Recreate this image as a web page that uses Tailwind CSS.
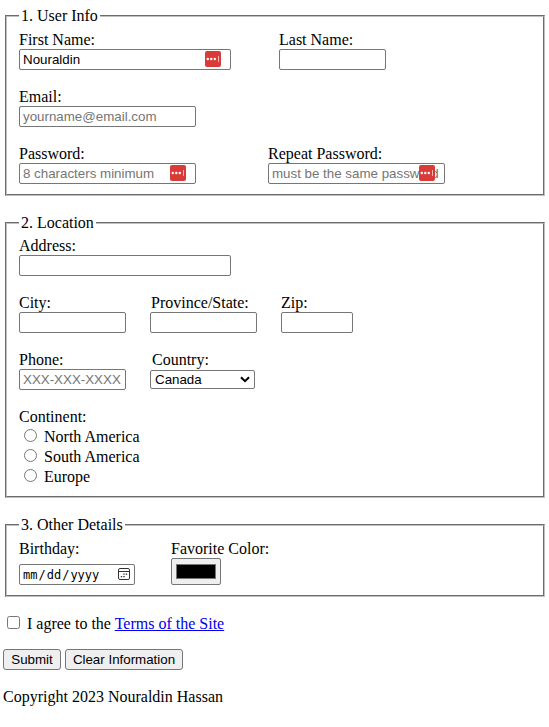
<!DOCTYPE html>
<html lang="en">
<head>
<meta charset="utf-8">
<title>Registration Form</title>
<script src="https://cdn.jsdelivr.net/npm/@tailwindcss/browser@4"></script>
</head>
<body class="bg-white text-black font-['Liberation_Serif',serif] text-[16px] leading-[18px]">
<svg class="hidden">
  <symbol id="key" viewBox="0 0 16 16"><rect width="16" height="16" rx="2" fill="#d93c38"/><g fill="#fff"><circle cx="2.8" cy="8" r="1.2"/><circle cx="6.3" cy="8" r="1.2"/><circle cx="9.8" cy="8" r="1.2"/></g><path d="M13.5 5v6" stroke="#f3b5b3" stroke-width="1"/></symbol>
</svg>
<form class="pt-[7px] pl-[3px] pr-1">
  <fieldset class="ml-[2px] min-w-0 border-2 border-[#c0c0c0] [border-style:groove] px-3 pt-[6px] pb-[10px]">
    <legend class="px-[2px] h-[18px]">1. User Info</legend>
    <div class="flex flex-col gap-[18px]">
      <div class="flex gap-12">
        <label class="relative block w-[212px]">First Name:
          <input type="text" value="Nouraldin" class="block w-full h-[21px] border border-[#767676] rounded-[2px] px-[3px] font-['Liberation_Sans',sans-serif] text-[13.333px] leading-[15px]">
          <svg class="absolute right-[10px] top-[20px] size-4"><use href="#key"/></svg>
        </label>
        <label class="block w-[107px]">Last Name:
          <input type="text" class="block w-full h-[21px] border border-[#767676] rounded-[2px]">
        </label>
      </div>
      <label class="block w-[177px]">Email:
        <input type="text" placeholder="yourname@email.com" class="block w-full h-[21px] border border-[#767676] rounded-[2px] px-[3px] font-['Liberation_Sans',sans-serif] text-[13.333px] leading-[15px] placeholder:text-[#757575]">
      </label>
      <div class="flex gap-[72px]">
        <label class="relative block w-[177px]">Password:
          <input type="text" placeholder="8 characters minimum" class="block w-full h-[21px] border border-[#767676] rounded-[2px] px-[3px] font-['Liberation_Sans',sans-serif] text-[13.333px] leading-[15px] placeholder:text-[#757575]">
          <svg class="absolute right-[10px] top-[20px] size-4"><use href="#key"/></svg>
        </label>
        <label class="relative block w-[177px]">Repeat Password:
          <input type="text" placeholder="must be the same password" class="block w-full h-[21px] border border-[#767676] rounded-[2px] px-[3px] font-['Liberation_Sans',sans-serif] text-[13.333px] leading-[15px] placeholder:text-[#757575]">
          <svg class="absolute right-[10px] top-[20px] size-4"><use href="#key"/></svg>
        </label>
      </div>
    </div>
  </fieldset>

  <fieldset class="mt-[18px] ml-[2px] min-w-0 border-2 border-[#c0c0c0] [border-style:groove] px-3 pt-[5px] pb-[10px]">
    <legend class="px-[2px] h-[18px]">2. Location</legend>
    <div class="flex flex-col gap-[18px]">
      <label class="block w-[212px]">Address:
        <input type="text" class="block w-full h-[21px] border border-[#767676] rounded-[2px]">
      </label>
      <div class="flex gap-6">
        <label class="block w-[107px]">City:
          <input type="text" class="block w-full h-[21px] border border-[#767676] rounded-[2px]">
        </label>
        <label class="block w-[107px]"><span class="block pl-px">Province/State:</span>
          <input type="text" class="block w-full h-[21px] border border-[#767676] rounded-[2px]">
        </label>
        <label class="block w-[72px]">Zip:
          <input type="text" class="block w-full h-[21px] border border-[#767676] rounded-[2px]">
        </label>
      </div>
      <div class="flex gap-6">
        <label class="block w-[107px]">Phone:
          <input type="text" placeholder="XXX-XXX-XXXX" class="block w-full h-[21px] border border-[#767676] rounded-[2px] px-[3px] font-['Liberation_Sans',sans-serif] text-[13.333px] leading-[15px] placeholder:text-[#757575]">
        </label>
        <label class="relative block w-[105px]"><span class="block pl-[2px]">Country:</span>
          <select class="mt-px block w-full h-[19px] appearance-none border border-[#767676] rounded-[2px] pl-1 bg-white font-['Liberation_Sans',sans-serif] text-[13.333px] leading-[15px]"><option>Canada</option></select>
          <svg class="absolute right-[5px] top-[25px] w-[10px] h-[7px]" viewBox="0 0 10 7"><path d="M1 1.2 5 5.2 9 1.2" fill="none" stroke="#000" stroke-width="2"/></svg>
        </label>
      </div>
      <div>
        <div>Continent:</div>
        <label class="flex h-5 gap-[7px] pl-[5px]"><input type="radio" name="continent" class="mt-[3px] size-[13px]"><span class="mt-[2px]">North America</span></label>
        <label class="flex h-5 gap-[7px] pl-[5px]"><input type="radio" name="continent" class="mt-[3px] size-[13px]"><span class="mt-[2px]">South America</span></label>
        <label class="flex h-5 gap-[7px] pl-[5px]"><input type="radio" name="continent" class="mt-[3px] size-[13px]"><span class="mt-[2px]">Europe</span></label>
      </div>
    </div>
  </fieldset>

  <fieldset class="mt-[18px] ml-[2px] min-w-0 border-2 border-[#c0c0c0] [border-style:groove] px-3 pt-[6px] pb-[10px]">
    <legend class="px-[2px] h-[18px]">3. Other Details</legend>
    <div class="flex gap-9">
      <div class="w-[116px]">Birthday:
        <div class="mt-[6px] flex h-[21px] items-center justify-between border border-[#767676] rounded-[2px] pl-[3px] pr-1 font-['DejaVu_Sans_Mono',monospace] text-[12px] leading-[15px]">
          <span class="flex gap-px pt-[2px]"><span>mm</span><span>/</span><span>dd</span><span>/</span><span>yyyy</span></span>
          <svg class="size-[12px] -mt-px" viewBox="0 0 12 12" fill="none" stroke="#333"><rect x=".5" y=".5" width="11" height="11" rx="1.5"/><path d="M1 3.5h10"/><path d="M5.3 6.2h1.4M7.8 6.2h1.4M2.8 8.7h1.4M5.3 8.7h1.4" stroke-width="1.3"/></svg>
        </div>
      </div>
      <div>Favorite Color:
        <div class="w-[50px] h-[27px] border border-[#767676] rounded-[2px] bg-[#efefef] px-1 py-[5px]"><div class="h-[15px] bg-black border border-[#777]"></div></div>
      </div>
    </div>
  </fieldset>

  <label class="mt-[18px] flex h-[18px] gap-[7px] pl-1"><input type="checkbox" class="mt-px size-[13px]"><span>I agree to the <a href="#" class="text-[#0000ee] underline">Terms of the Site</a></span></label>
  <div class="mt-4 flex gap-1 font-['Liberation_Sans',sans-serif] text-[13.333px] leading-[15px]">
    <button type="button" class="w-[58px] h-[21px] whitespace-nowrap border border-[#767676] rounded-[3px] bg-[#efefef]">Submit</button>
    <button type="button" class="w-[118px] h-[21px] whitespace-nowrap border border-[#767676] rounded-[3px] bg-[#efefef]">Clear Information</button>
  </div>
  <p class="mt-[18px]">Copyright 2023 Nouraldin Hassan</p>
</form>
</body>
</html>
